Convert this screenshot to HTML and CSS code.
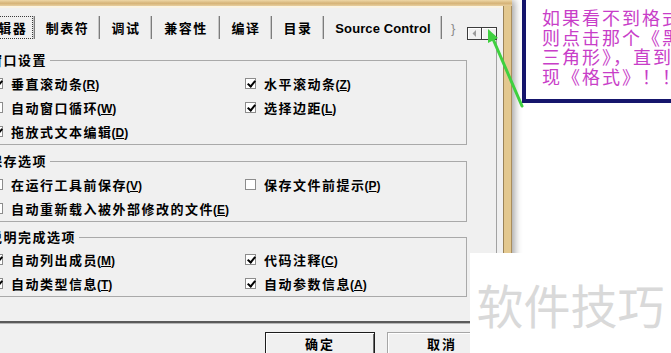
FILE: index.html
```html
<!DOCTYPE html>
<html lang="zh-CN">
<head>
<meta charset="utf-8">
<title>选项</title>
<link rel="stylesheet" href="styles.css">
</head>
<body>
<div class="screen">
  <div class="window">
    <div class="titlebar"></div>
    <div class="window-body">
      <div class="dialog">
        <div class="tabstrip">
          <div class="tabs">
            <div class="tab tab-editor active"><span class="focus">编辑器</span></div>
            <div class="tab tab-w65">制表符</div>
            <div class="tab tab-w52">调试</div>
            <div class="tab tab-w68">兼容性</div>
            <div class="tab tab-w52">编译</div>
            <div class="tab tab-w52">目录</div>
            <div class="tab tab-source">Source Control</div>
            <div class="tab tab-more">}</div>
          </div>
          <div class="spin">
            <div class="spin-btn">
              <svg width="5" height="7" viewBox="0 0 5 7"><polygon points="4,0 4,7 0.5,3.5" fill="#9a9a9a"/></svg>
            </div>
            <div class="spin-btn">
              <svg width="5" height="7" viewBox="0 0 5 7"><polygon points="1,0 1,7 4.5,3.5" fill="#000"/></svg>
            </div>
          </div>
        </div>

        <div class="page">
          <div class="group">
            <div class="group-title">窗口设置</div>
            <div class="rows">
              <label class="check"><span class="box on"></span><span class="text">垂直滚动条<span class="key">(<u>R</u>)</span></span></label>
              <label class="check"><span class="box on"></span><span class="text">水平滚动条<span class="key">(<u>Z</u>)</span></span></label>
              <label class="check"><span class="box"></span><span class="text">自动窗口循环<span class="key">(<u>W</u>)</span></span></label>
              <label class="check"><span class="box on"></span><span class="text">选择边距<span class="key">(<u>L</u>)</span></span></label>
              <label class="check"><span class="box on"></span><span class="text">拖放式文本编辑<span class="key">(<u>D</u>)</span></span></label>
            </div>
          </div>

          <div class="group group-save">
            <div class="group-title">保存选项</div>
            <div class="rows">
              <label class="check"><span class="box"></span><span class="text">在运行工具前保存<span class="key">(<u>V</u>)</span></span></label>
              <label class="check"><span class="box"></span><span class="text">保存文件前提示<span class="key">(<u>P</u>)</span></span></label>
              <label class="check"><span class="box"></span><span class="text">自动重新载入被外部修改的文件<span class="key">(<u>E</u>)</span></span></label>
            </div>
          </div>

          <div class="group group-complete">
            <div class="group-title">说明完成选项</div>
            <div class="rows">
              <label class="check"><span class="box on"></span><span class="text">自动列出成员<span class="key">(<u>M</u>)</span></span></label>
              <label class="check"><span class="box on"></span><span class="text">代码注释<span class="key">(<u>C</u>)</span></span></label>
              <label class="check"><span class="box on"></span><span class="text">自动类型信息<span class="key">(<u>T</u>)</span></span></label>
              <label class="check"><span class="box on"></span><span class="text">自动参数信息<span class="key">(<u>A</u>)</span></span></label>
            </div>
          </div>
        </div>

        <div class="buttons">
          <button class="btn default" type="button">确定</button>
          <button class="btn" type="button">取消</button>
        </div>
      </div>
      <div class="frame-edge"></div>
    </div>
  </div>

  <div class="side">
    <div class="note">
      <p>如果看不到格式</p>
      <p>则点击那个《黑</p>
      <p>三角形》，直到</p>
      <p>现《格式》！！</p>
    </div>
  </div>

  <svg class="arrow" width="671" height="353" viewBox="0 0 671 353">
    <line x1="493" y1="39" x2="522" y2="106" stroke="#3fd03f" stroke-width="3" stroke-linecap="round"/>
    <polygon points="488,29 498,38 488,43" fill="#3fd03f"/>
  </svg>

  <div class="watermark">软件技巧</div>
</div>
</body>
</html>
```

FILE: styles.css
```css
* {
  box-sizing: border-box;
  margin: 0;
  padding: 0;
}

body {
  width: 671px;
  height: 353px;
  overflow: hidden;
  background: #ffffff;
  font-family: "Liberation Sans", "Noto Sans CJK SC", sans-serif;
  color: #000;
}

.screen {
  position: relative;
  display: flex;
  width: 671px;
  height: 353px;
  overflow: hidden;
}

/* ---------- window ---------- */
.window {
  flex: none;
  width: 512px;
  display: flex;
  flex-direction: column;
  box-shadow: 3px 0 7px rgba(0, 0, 0, 0.35);
  position: relative;
  z-index: 1;
}

.titlebar {
  flex: none;
  height: 6px;
  background: linear-gradient(#eed7a6, #d6b377 55%, #e8cf9f);
}

.window-body {
  flex: 1;
  display: flex;
  min-height: 0;
}

.dialog {
  flex: none;
  width: 503px;
  background: #f0f0f0;
  border-top: 2px solid #faf3e3;
  display: flex;
  flex-direction: column;
  overflow: hidden;
}

.frame-edge {
  flex: 1;
  background: linear-gradient(to right, #9a8358 0 1px, #e3c88f 1px 8px, #a98d5d 8px 9px);
}

/* ---------- tabs ---------- */
.tabstrip {
  flex: none;
  height: 32px;
  display: flex;
}

.tabs {
  flex: 1;
  min-width: 0;
  display: flex;
  overflow: hidden;
  margin-left: -27px;
  padding-top: 8px;
}

.tab {
  flex: none;
  height: 23px;
  padding-top: 2px;
  padding-left: 1px;
  line-height: 21px;
  text-align: center;
  border-right: 1px solid #7c7c7c;
  box-shadow: inset -1px 0 0 #c6c6c6;
  font-size: 13px;
  font-weight: 700;
  letter-spacing: 1.5px;
  white-space: nowrap;
}

.tab-editor { width: 62px; padding: 0 1px 0 2px; }
.tab-w65 { width: 65px; }
.tab-w52 { width: 52px; }
.tab-w68 { width: 68px; }
.tab-source { width: 118px; letter-spacing: 0.1px; }
.tab-more {
  width: 40px;
  text-align: left;
  padding-left: 9px;
  color: #8a8a8a;
  font-weight: 400;
  border-right: none;
  box-shadow: none;
}

.focus {
  display: block;
  height: 23px;
  line-height: 21px;
  padding-top: 1px;
  padding-left: 3px;
  border: 1px dotted #3a3a3a;
}

.spin {
  flex: none;
  display: flex;
  margin: 19px 6px 0 0;
}

.spin-btn {
  width: 15px;
  height: 13px;
  display: flex;
  align-items: center;
  justify-content: center;
  background: #f0f0f0;
  border: 1px solid #3c3c3c;
  box-shadow: inset 1px 1px 0 #ffffff;
}

.spin-btn + .spin-btn {
  border-left: none;
}

/* ---------- page / groups ---------- */
.page {
  flex: none;
  width: 515px;
  height: 283px;
  margin-left: -18px;
  padding: 20px 29px 0 0;
  border-right: 1px solid #a2a2a2;
  border-bottom: 2px solid #5a5a5a;
  box-shadow: 0 1px 0 #b6b6b6;
}

.group {
  border: 1px solid #a9a9a9;
  padding-bottom: 1px;
  margin-bottom: 16px;
}

.group-save {
  margin-bottom: 15px;
}

.group-title {
  width: fit-content;
  height: 16px;
  line-height: 16px;
  margin: -8px 0 2px 4px;
  padding: 0 3px 0 2px;
  background: #f0f0f0;
  font-size: 13px;
  font-weight: 700;
  letter-spacing: 1.5px;
  white-space: nowrap;
}

.group-complete .group-title {
  margin-bottom: 1px;
}

.rows {
  display: grid;
  grid-template-columns: 253px 1fr;
  padding-left: 9px;
}

.check {
  height: 24px;
  display: flex;
  align-items: center;
  gap: 8px;
  font-size: 13px;
  font-weight: 700;
  letter-spacing: 1.5px;
  white-space: nowrap;
}

.box {
  flex: none;
  position: relative;
  width: 11px;
  height: 11px;
  border: 1px solid #8c8c8c;
  background: #ffffff;
}

.box.on::after {
  content: "";
  position: absolute;
  left: 3px;
  top: 0;
  width: 3px;
  height: 6px;
  border: solid #000;
  border-width: 0 2px 2px 0;
  transform: rotate(40deg);
}

.key {
  letter-spacing: 0;
  font-size: 12px;
  margin-left: -1px;
}

/* ---------- buttons ---------- */
.buttons {
  display: flex;
  gap: 12px;
  padding-left: 265px;
  margin-top: 9px;
}

.btn {
  flex: none;
  width: 110px;
  height: 25px;
  font-family: "Liberation Sans", "Noto Sans CJK SC", sans-serif;
  font-size: 13px;
  font-weight: 700;
  letter-spacing: 2px;
  line-height: 21px;
  text-align: center;
  color: #000;
  background: #f0f0f0;
  border: 1px solid #a6a6a6;
  box-shadow: inset 1px 1px 0 #ffffff;
}

.btn.default {
  border: 1px solid #1c1c1c;
  box-shadow: inset 1px 1px 0 #ffffff, inset -1px 0 0 #6a6a6a, inset 1px 0 0 #6a6a6a;
}

/* ---------- side note ---------- */
.side {
  flex: 1;
  min-width: 0;
  background: #ffffff;
}

.note {
  height: 103px;
  margin-left: 10px;
  padding: 8px 0 0 16px;
  border-left: 4px solid #15156c;
  border-bottom: 4px solid #15156c;
  overflow: hidden;
  white-space: nowrap;
  font-family: "Noto Sans CJK SC", sans-serif;
  font-size: 18px;
  font-weight: 400;
  line-height: 19.7px;
  letter-spacing: 2px;
  color: #c83ec8;
}

/* ---------- overlays ---------- */
.arrow {
  position: absolute;
  left: 0;
  top: 0;
  z-index: 2;
  pointer-events: none;
}

.watermark {
  position: absolute;
  left: 470px;
  top: 253px;
  width: 201px;
  height: 100px;
  z-index: 3;
  display: flex;
  align-items: center;
  justify-content: center;
  background: #ffffff;
  font-family: "Noto Sans CJK SC", sans-serif;
  font-size: 47px;
  font-weight: 400;
  color: #d9d9d9;
  letter-spacing: 0;
}
```
